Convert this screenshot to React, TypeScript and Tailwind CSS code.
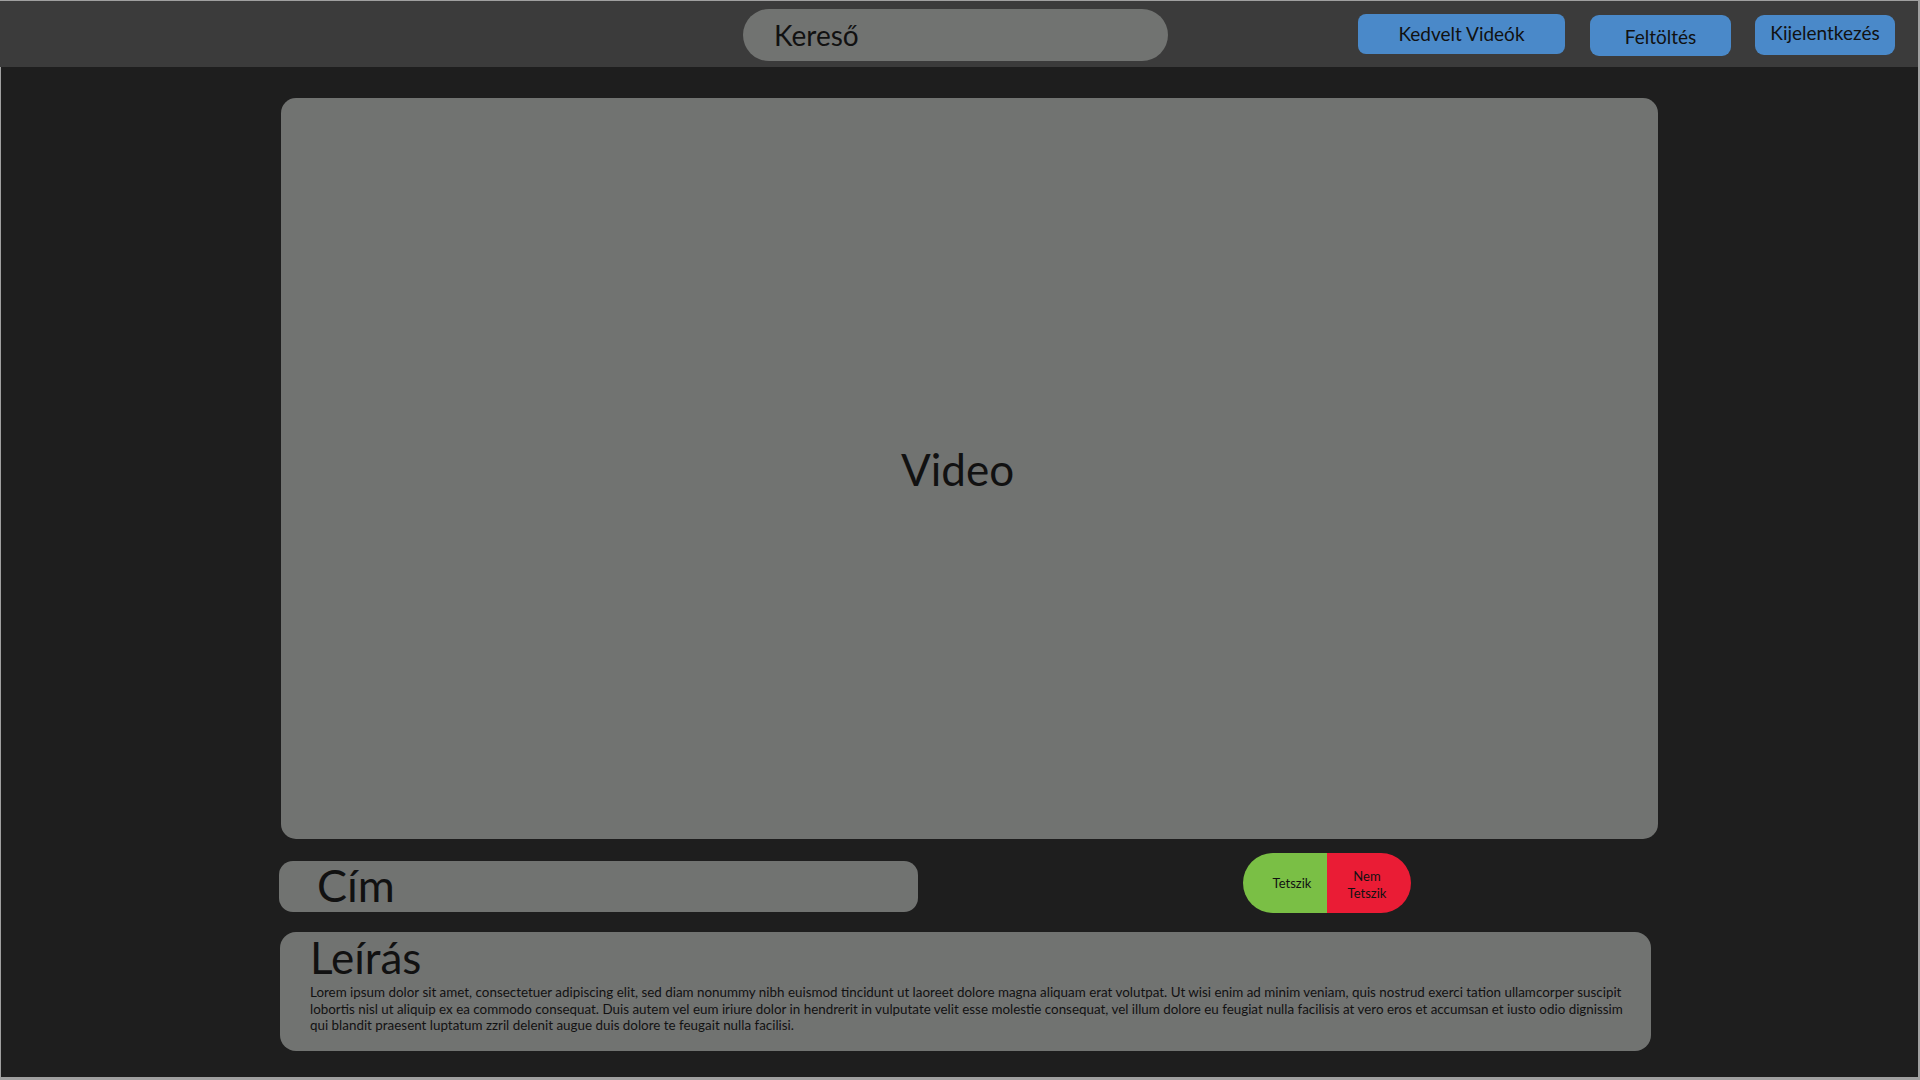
import React from "react";

export default function App() {
  return (
    <div
      className="w-[1920px] h-[1080px] bg-[#a0a0a0] pt-px pb-[3px] pr-[2px] flex flex-col text-[#111111] font-['Lato',sans-serif]"
    >
      {/* Header */}
      <header className="h-[66px] shrink-0 bg-[#3b3b3b] flex items-start">
        <div className="ml-[743px] mt-[8px] w-[425px] h-[52px] rounded-full bg-[#717371] flex items-center pl-[31px]">
          <span className="text-[28px] leading-none">Kereső</span>
        </div>
        <button className="ml-[190px] mt-[13px] w-[207px] h-[40px] rounded-[8px] bg-[#4a89c9] flex items-center justify-center text-[19px] leading-none pb-[2px]">
          Kedvelt Videók
        </button>
        <button className="ml-[25px] mt-[14px] w-[141px] h-[41px] rounded-[9px] bg-[#4a89c9] flex items-center justify-center text-[19px] leading-none pt-[1px]">
          Feltöltés
        </button>
        <button className="ml-[24px] mt-[14px] w-[140px] h-[40px] rounded-[9px] bg-[#4a89c9] flex items-center justify-center text-[19px] leading-none pb-[5px]">
          Kijelentkezés
        </button>
      </header>

      {/* Body */}
      <main className="flex-1 ml-px bg-[#1e1e1e] pt-[31px] pl-[280px]">
        <div className="w-[1377px] flex flex-col">
          <div className="h-[741px] rounded-[15px] bg-[#717371] flex items-center justify-center pr-[24px]">
            <span className="text-[44px] leading-none">Video</span>
          </div>

          <div className="mt-[14px] flex items-start">
            <div className="mt-[8px] -ml-[2px] w-[639px] h-[51px] rounded-[14px] bg-[#717371] flex items-center pl-[38px] pb-[2px]">
              <span className="text-[45px] leading-none">Cím</span>
            </div>
            <div className="ml-[325px] w-[168px] h-[60px] rounded-full overflow-hidden flex">
              <div className="w-[84px] h-full bg-[#7abf45] flex items-center justify-center pl-[14px] text-[13px] leading-none">
                Tetszik
              </div>
              <div className="w-[84px] h-full bg-[#ea1c35] flex flex-col items-center justify-center text-[13px] leading-[17px] pr-[4px] pt-[3px]">
                <span>Nem</span>
                <span>Tetszik</span>
              </div>
            </div>
          </div>

          <div className="mt-[19px] -ml-px w-[1371px] h-[119px] rounded-[16px] bg-[#717371] pl-[30px] pt-[3px]">
            <div className="text-[44px] leading-none">Leírás</div>
            <p className="mt-[5px] text-[13.4px] leading-[16.5px] whitespace-nowrap">
              Lorem ipsum dolor sit amet, consectetuer adipiscing elit, sed diam nonummy nibh euismod tincidunt ut laoreet dolore magna aliquam erat volutpat. Ut wisi enim ad minim veniam, quis nostrud exerci tation ullamcorper suscipit
              <br />
              lobortis nisl ut aliquip ex ea commodo consequat. Duis autem vel eum iriure dolor in hendrerit in vulputate velit esse molestie consequat, vel illum dolore eu feugiat nulla facilisis at vero eros et accumsan et iusto odio dignissim
              <br />
              qui blandit praesent luptatum zzril delenit augue duis dolore te feugait nulla facilisi.
            </p>
          </div>
        </div>
      </main>
    </div>
  );
}
